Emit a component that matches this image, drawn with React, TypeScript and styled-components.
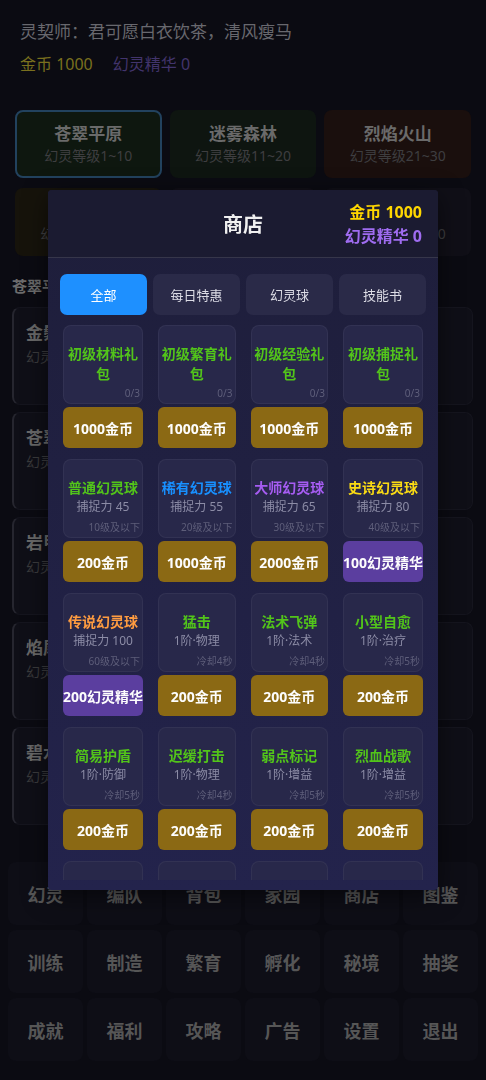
import styled, {createGlobalStyle} from 'styled-components'

const GlobalStyle = createGlobalStyle`
  * { box-sizing: border-box; }
  body {
    margin: 0;
    background: #0b0b12;
    font-family: "Noto Sans", "Noto Sans CJK SC", sans-serif;
  }
`

// page under the shop is shown dimmed, colours below are already the dimmed ones
const regions = [
  {name: '苍翠平原', lv: '幻灵等级1~10', bg: '#0e170f', active: true},
  {name: '迷雾森林', lv: '幻灵等级11~20', bg: '#0e1510'},
  {name: '烈焰火山', lv: '幻灵等级21~30', bg: '#1a0f0d'},
  {name: '黄沙荒漠', lv: '幻灵等级31~40', bg: '#16130b'},
  {name: '幽暗沼泽', lv: '幻灵等级41~50', bg: '#110f17'},
  {name: '冰封雪原', lv: '幻灵等级51~60', bg: '#100f17'},
]

const spirits = [
  {name: '金鬃狮', sub: '幻灵等级 5'},
  {name: '苍翠鹿', sub: '幻灵等级 3'},
  {name: '岩甲龟', sub: '幻灵等级 7'},
  {name: '焰尾狐', sub: '幻灵等级 9'},
  {name: '碧水蛇', sub: '幻灵等级 6'},
]

const menu = [
  '幻灵', '编队', '背包', '家园', '商店', '图鉴',
  '训练', '制造', '繁育', '孵化', '秘境', '抽奖',
  '成就', '福利', '攻略', '广告', '设置', '退出',
]

const tabs = ['全部', '每日特惠', '幻灵球', '技能书']

type Item = {
  name: string
  color: string
  desc?: string
  foot: string
  price: string
  essence?: boolean
}

const GREEN = '#52c41a'

const items: Item[] = [
  {name: '初级材料礼包', color: GREEN, foot: '0/3', price: '1000金币'},
  {name: '初级繁育礼包', color: GREEN, foot: '0/3', price: '1000金币'},
  {name: '初级经验礼包', color: GREEN, foot: '0/3', price: '1000金币'},
  {name: '初级捕捉礼包', color: GREEN, foot: '0/3', price: '1000金币'},
  {name: '普通幻灵球', color: GREEN, desc: '捕捉力 45', foot: '10级及以下', price: '200金币'},
  {name: '稀有幻灵球', color: '#1890ff', desc: '捕捉力 55', foot: '20级及以下', price: '1000金币'},
  {name: '大师幻灵球', color: '#a65cf2', desc: '捕捉力 65', foot: '30级及以下', price: '2000金币'},
  {name: '史诗幻灵球', color: '#fadb14', desc: '捕捉力 80', foot: '40级及以下', price: '100幻灵精华', essence: true},
  {name: '传说幻灵球', color: '#ff9c40', desc: '捕捉力 100', foot: '60级及以下', price: '200幻灵精华', essence: true},
  {name: '猛击', color: GREEN, desc: '1阶·物理', foot: '冷却4秒', price: '200金币'},
  {name: '法术飞弹', color: GREEN, desc: '1阶·法术', foot: '冷却4秒', price: '200金币'},
  {name: '小型自愈', color: GREEN, desc: '1阶·治疗', foot: '冷却5秒', price: '200金币'},
  {name: '简易护盾', color: GREEN, desc: '1阶·防御', foot: '冷却5秒', price: '200金币'},
  {name: '迟缓打击', color: GREEN, desc: '1阶·物理', foot: '冷却4秒', price: '200金币'},
  {name: '弱点标记', color: GREEN, desc: '1阶·增益', foot: '冷却5秒', price: '200金币'},
  {name: '烈血战歌', color: GREEN, desc: '1阶·增益', foot: '冷却5秒', price: '200金币'},
  {name: '疾风步', color: GREEN, desc: '1阶·增益', foot: '冷却5秒', price: '200金币'},
  {name: '火球术', color: GREEN, desc: '1阶·法术', foot: '冷却4秒', price: '200金币'},
  {name: '治愈之光', color: GREEN, desc: '1阶·治疗', foot: '冷却6秒', price: '200金币'},
  {name: '坚韧意志', color: GREEN, desc: '1阶·防御', foot: '冷却6秒', price: '200金币'},
]

export default function App() {
  return (
    <>
      <GlobalStyle />
      <Page>
        <Player>灵契师：君可愿白衣饮茶，清风瘦马</Player>
        <Wallet>
          <Gold>金币 1000</Gold>
          <Essence>幻灵精华 0</Essence>
        </Wallet>

        <RegionGrid>
          {regions.map(r => (
            <Region key={r.name} $bg={r.bg} $active={r.active}>
              <RegionName>{r.name}</RegionName>
              <RegionLv>{r.lv}</RegionLv>
            </Region>
          ))}
        </RegionGrid>

        <SectionLabel>苍翠平原</SectionLabel>
        <SpiritList>
          {spirits.map(s => (
            <SpiritCard key={s.name}>
              <SpiritName>{s.name}</SpiritName>
              <SpiritSub>{s.sub}</SpiritSub>
            </SpiritCard>
          ))}
        </SpiritList>

        <Menu>
          {menu.map(m => <MenuCell key={m}>{m}</MenuCell>)}
        </Menu>
      </Page>

      <Modal>
        <Header>
          <span />
          <Title>商店</Title>
          <Balance>
            <BalanceGold>金币 1000</BalanceGold>
            <BalanceEssence>幻灵精华 0</BalanceEssence>
          </Balance>
        </Header>
        <Body>
          <Tabs>
            {tabs.map((t, i) => <Tab key={t} $active={i === 0}>{t}</Tab>)}
          </Tabs>
          <Scroll>
            <ItemGrid>
              {items.map(it => (
                <ItemCol key={it.name}>
                  <ItemCard>
                    <ItemName $color={it.color}>{it.name}</ItemName>
                    {it.desc && <ItemDesc>{it.desc}</ItemDesc>}
                    <ItemFoot>{it.foot}</ItemFoot>
                  </ItemCard>
                  <BuyButton $essence={it.essence}>{it.price}</BuyButton>
                </ItemCol>
              ))}
            </ItemGrid>
          </Scroll>
        </Body>
      </Modal>
    </>
  )
}

const Page = styled.div`
  height: 1080px;
  overflow: hidden;
  padding-top: 20px;
  background: #0b0b12;
`
const Player = styled.div`
  padding: 0 20px;
  font-size: 17px;
  line-height: 24px;
  color: #68686e;
`
const Wallet = styled.div`
  display: flex;
  gap: 20px;
  margin-top: 8px;
  padding: 0 20px;
  font-size: 16px;
  line-height: 24px;
`
const Gold = styled.span`
  color: #7a701e;
`
const Essence = styled.span`
  color: #42346c;
`
const RegionGrid = styled.div`
  display: grid;
  grid-template-columns: repeat(3, 1fr);
  gap: 10px 8px;
  margin-top: 34px;
  padding: 0 15px;
`
const Region = styled.div<{$bg: string; $active?: boolean}>`
  height: 68px;
  border-radius: 8px;
  background: ${p => p.$bg};
  border: 2px solid ${p => p.$active ? '#22425e' : 'transparent'};
  display: flex;
  flex-direction: column;
  align-items: center;
  justify-content: center;
`
const RegionName = styled.div`
  font-size: 17px;
  font-weight: 700;
  line-height: 24px;
  color: #6a6a6a;
`
const RegionLv = styled.div`
  font-size: 14px;
  line-height: 20px;
  color: #3e3e40;
`
const SectionLabel = styled.div`
  margin-top: 20px;
  padding: 0 12px;
  font-size: 15px;
  font-weight: 700;
  line-height: 20px;
  color: #6c6c6c;
`
const SpiritList = styled.div`
  display: flex;
  flex-direction: column;
  gap: 7px;
  margin-top: 11px;
  padding: 0 13px 0 12px;
`
const SpiritCard = styled.div`
  height: 98px;
  border-radius: 8px;
  background: #0f0f17;
  border: 1px solid #15151e;
  border-left: 2px solid #26262f;
  padding: 12px 12px;
`
const SpiritName = styled.div`
  font-size: 17px;
  font-weight: 700;
  line-height: 26px;
  color: #686868;
`
const SpiritSub = styled.div`
  font-size: 14px;
  line-height: 22px;
  color: #3a3a3c;
`
const Menu = styled.div`
  display: grid;
  grid-template-columns: repeat(6, 1fr);
  gap: 5px 4px;
  margin-top: 37px;
  padding: 0 8px;
`
const MenuCell = styled.div`
  height: 63px;
  border-radius: 8px;
  background: #0e0e16;
  display: flex;
  align-items: center;
  justify-content: center;
  font-size: 18px;
  font-weight: 700;
  color: #565656;
`
const Modal = styled.div`
  position: fixed;
  z-index: 11;
  top: 190px;
  left: 48px;
  width: 390px;
  height: 700px;
  display: flex;
  flex-direction: column;
  border-radius: 4px;
  overflow: hidden;
  background: linear-gradient(#1e1e3a, #23234c);
  box-shadow: 0 6px 24px rgba(0,0,0,.5);
`
const Header = styled.div`
  height: 68px;
  flex-shrink: 0;
  display: grid;
  grid-template-columns: 1fr auto 1fr;
  align-items: center;
  padding: 0 16px;
  background: #1b1b31;
  border-bottom: 1px solid rgba(255,255,255,.12);
`
const Title = styled.div`
  font-size: 20px;
  font-weight: 700;
  color: #f0f0f0;
`
const Balance = styled.div`
  justify-self: end;
  text-align: right;
  font-size: 16px;
  font-weight: 700;
  line-height: 24px;
`
const BalanceGold = styled.div`
  color: #ffd700;
`
const BalanceEssence = styled.div`
  color: #9f6cf0;
`
const Body = styled.div`
  flex: 1;
  min-height: 0;
  display: flex;
  flex-direction: column;
  padding: 16px 12px 10px;
`
const Tabs = styled.div`
  display: grid;
  grid-template-columns: repeat(4, 1fr);
  gap: 6px;
`
const Tab = styled.div<{$active?: boolean}>`
  height: 41px;
  border-radius: 7px;
  display: flex;
  align-items: center;
  justify-content: center;
  font-size: 13px;
  color: ${p => p.$active ? '#ffffff' : '#dddde6'};
  background: ${p => p.$active ? '#1e90ff' : '#2a2a48'};
`
const Scroll = styled.div`
  flex: 1;
  min-height: 0;
  overflow: hidden;
  margin-top: 10px;
  padding: 0 3px;
`
const ItemGrid = styled.div`
  display: grid;
  grid-template-columns: repeat(4, 1fr);
  gap: 11px 15px;
`
const ItemCol = styled.div`
  display: flex;
  flex-direction: column;
  gap: 3px;
`
const ItemCard = styled.div`
  height: 79px;
  border-radius: 8px;
  background: #28284a;
  border: 1px solid rgba(255,255,255,.05);
  display: flex;
  flex-direction: column;
  align-items: center;
  padding: 18px 2px 3px;
  text-align: center;
`
const ItemName = styled.div<{$color: string}>`
  font-size: 14px;
  font-weight: 700;
  line-height: 20px;
  color: ${p => p.$color};
`
const ItemDesc = styled.div`
  font-size: 12px;
  line-height: 18px;
  color: #8c8ca6;
`
const ItemFoot = styled.div`
  margin-top: auto;
  align-self: flex-end;
  font-size: 10px;
  line-height: 14px;
  color: #5e5e7a;
  white-space: nowrap;
`
const BuyButton = styled.div<{$essence?: boolean}>`
  height: 41px;
  border-radius: 6px;
  display: flex;
  align-items: center;
  justify-content: center;
  font-size: 14px;
  font-weight: 700;
  color: #fdfdfd;
  background: ${p => p.$essence ? '#5b3e9f' : '#8b6914'};
  white-space: nowrap;
`
